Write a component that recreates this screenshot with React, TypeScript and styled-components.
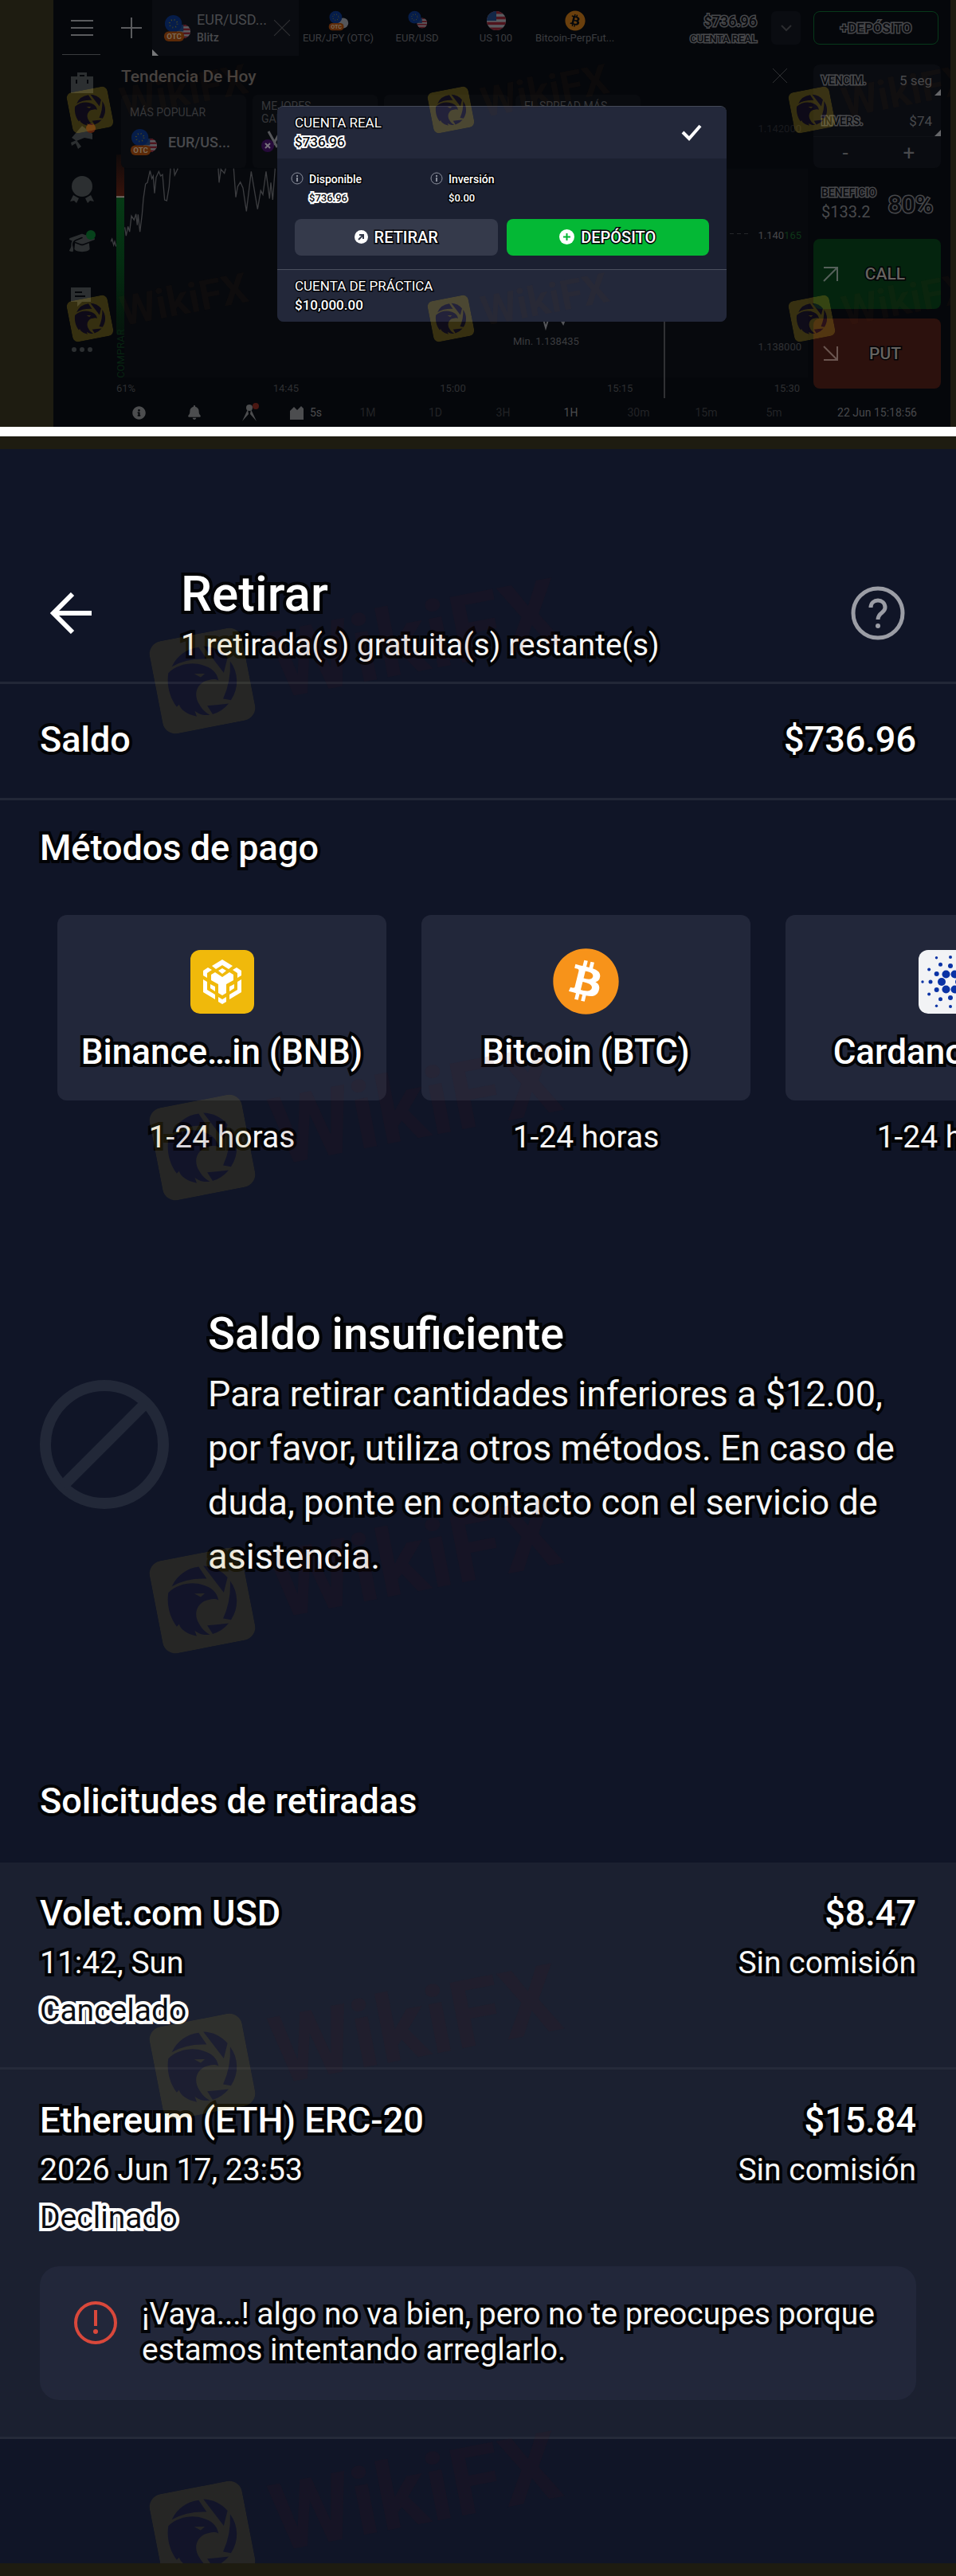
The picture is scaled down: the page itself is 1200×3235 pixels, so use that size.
import React from 'react';
import styled, { createGlobalStyle, css } from 'styled-components';
import { FaBell, FaBitcoin, FaGraduationCap } from 'react-icons/fa6';
import { FaInfoCircle } from 'react-icons/fa';

const GlobalStyle = createGlobalStyle`
  * { box-sizing: border-box; }
  body { margin: 0; background: #fff; font-family: Roboto, "Liberation Sans", sans-serif; }
  h1, h2, h3, p, ul { margin: 0; padding: 0; font-weight: inherit; }
  ul { list-style: none; }
  button { font: inherit; color: inherit; border: 0; padding: 0; background: none; cursor: pointer; }
  svg { display: block; flex: none; }
`;

const outline = css`
  -webkit-text-stroke: 8px #020306;
  paint-order: stroke fill;
`;

const Page = styled.div`
  display: flex;
  flex-direction: column;
  gap: 12px;
`;

/* ---------- shared watermark ---------- */

const MarkBox = styled.div<{ $x: number; $y: number; $size: number; $strong?: boolean }>`
  position: absolute;
  left: ${(p) => p.$x}px;
  top: ${(p) => p.$y}px;
  display: flex;
  align-items: center;
  gap: ${(p) => p.$size / 4}px;
  width: max-content;
  transform: rotate(-11deg);
  transform-origin: ${(p) => p.$size / 2}px ${(p) => p.$size / 2}px;
  pointer-events: none;
  z-index: 5;
  span {
    font: 700 ${(p) => p.$size}px/1 Roboto, sans-serif;
    color: ${(p) => (p.$strong ? 'rgba(120, 50, 20, 0.07)' : 'rgba(80, 20, 20, 0.10)')};
  }
  svg { opacity: ${(p) => (p.$strong ? 0.27 : 0.13)}; }
`;

function Watermark({ x, y, size, strong }: { x: number; y: number; size: number; strong?: boolean }) {
  return (
    <MarkBox $x={x} $y={y} $size={size} $strong={strong} aria-hidden>
      <svg width={size} height={size} viewBox="0 0 100 100">
        <rect width="100" height="100" rx="14" fill="#b89a1e" />
        <g fill="#26143c">
          <path d="M21 29A36 36 0 0 1 53 14L59 28Q38 23 21 29Z" />
          <path d="M58 14A36 36 0 0 1 81 31L74 46Z" />
          <path d="M83 35A36 36 0 0 1 76 76L68 73Q80 56 83 35Z" />
          <path d="M73 79A36 36 0 0 1 54 87L50 77Q62 78 73 79Z" />
          <path d="M16 35C28 27 44 28 54 34C62 38 67 44 67 53C62 49 57 51 52 51C42 54 38 64 42 74C44 80 47 84 51 87C43 87 39 83 36 80L37 86C27 82 21 75 21 70L18 72C12 60 12 46 16 35Z" />
        </g>
        <path d="M43 41L54 43L49 46Z" fill="#b89a1e" />
      </svg>
      <span>WikiFX</span>
    </MarkBox>
  );
}

/* ---------- trading terminal ---------- */

const Terminal = styled.section`
  position: relative;
  overflow: hidden;
  display: flex;
  flex-direction: column;
  height: 536px;
  border-left: 67px solid #1e1c11;
  border-right: 7px solid #1e1c11;
  background: #05070b;
  color: #48494c;
`;

const TopBar = styled.header`
  display: flex;
  height: 71px;
`;

const BarButton = styled.button<{ $w: number }>`
  position: relative;
  width: ${(p) => p.$w}px;
  display: grid;
  place-items: center;
  color: #5a5b5e;
`;

const MenuButton = styled(BarButton)`
  &::after {
    content: '';
    position: absolute;
    left: 11px;
    right: 13px;
    bottom: 1px;
    height: 1px;
    background: #3a3b3e;
  }
`;

const ActiveTab = styled.div`
  position: relative;
  width: 184px;
  display: flex;
  align-items: center;
  gap: 7px;
  padding-left: 14px;
  background: #0a0c11;
  &::after {
    content: '';
    position: absolute;
    left: 0;
    bottom: 0;
    border: 4px solid transparent;
    border-left-color: #77787a;
    border-bottom-color: #77787a;
  }
`;

const ActiveName = styled.div`
  flex: 1;
  font-size: 18px;
  line-height: 24px;
  white-space: nowrap;
  small { display: block; font-size: 14px; line-height: 20px; font-weight: 500; }
`;

const CloseButton = styled.button`
  padding-right: 10px;
  color: #303134;
`;

const Tab = styled.button`
  width: 99px;
  display: flex;
  flex-direction: column;
  align-items: center;
  gap: 1px;
  padding-top: 13px;
  font-size: 13px;
  line-height: 16px;
  white-space: nowrap;
  color: #3c3d40;
`;

const hollow = css`
  color: #08090d;
  -webkit-text-stroke: 3px #47484b;
  paint-order: stroke fill;
  font-weight: 500;
`;

const Balance = styled.div`
  margin-left: auto;
  padding-top: 15px;
  text-align: right;
  font-size: 18px;
  line-height: 24px;
  ${hollow}
  small { display: block; font-size: 13px; line-height: 20px; }
`;

const Chevron = styled.button`
  width: 37px;
  height: 42px;
  margin: 14px 16px 0 18px;
  border-radius: 6px;
  background: #0a0c11;
  display: grid;
  place-items: center;
`;

const TopDeposit = styled.button`
  width: 157px;
  height: 42px;
  margin: 14px 15px 0 0;
  border: 1px solid #07391a;
  border-radius: 8px;
  font-size: 17px;
  ${hollow}
`;

const Body = styled.div`
  flex: 1;
  display: grid;
  grid-template-columns: 72px 1fr 179px;
`;

const Sidebar = styled.nav`
  display: flex;
  flex-direction: column;
`;

const SideButton = styled.button<{ $dot?: string }>`
  position: relative;
  height: 67px;
  display: grid;
  place-items: center;
  color: #2c2f31;
  &::after {
    content: '';
    display: ${(p) => (p.$dot ? 'block' : 'none')};
    position: absolute;
    right: 19px;
    top: 18px;
    width: 12px;
    height: 12px;
    border-radius: 50%;
    background: ${(p) => p.$dot};
  }
`;

const Main = styled.div`
  position: relative;
  display: flex;
  flex-direction: column;
`;

const ChartSvg = styled.svg`
  position: absolute;
  inset: 0;
  width: 100%;
  height: 100%;
  text { font-family: Roboto, sans-serif; font-size: 13px; }
`;

const TrendHead = styled.div`
  position: relative;
  display: flex;
  justify-content: space-between;
  height: 49px;
  padding: 0 15px 0 13px;
  h2 { font-size: 21px; line-height: 52px; font-weight: 500; color: #47423f; }
`;

const TrendCards = styled.div`
  position: relative;
  display: flex;
  gap: 8px;
  padding-left: 13px;
`;

const TrendCard = styled.div`
  width: 157px;
  height: 92px;
  padding: 6px 11px;
  border-radius: 6px;
  background: #090b0f;
  color: #36373a;
  font-size: 14px;
  line-height: 16px;
`;

const TrendLabel = styled.div`
  height: 32px;
  display: flex;
  align-items: center;
`;

const TrendAsset = styled.div`
  display: flex;
  align-items: center;
  gap: 13px;
  margin-top: 4px;
  font-size: 18px;
  line-height: 28px;
  font-weight: 500;
  color: #48494c;
`;

const TimeAxis = styled.div`
  position: relative;
  margin-top: auto;
  display: grid;
  grid-template-columns: 197fr 210fr 210fr 210fr 31fr;
  padding: 0 10px 0 7px;
  font-size: 13px;
  line-height: 24px;
  color: #2e2f32;
`;

const Toolbar = styled.div`
  position: relative;
  display: flex;
  height: 36px;
  font-size: 14px;
  color: #222326;
`;

const Tool = styled.button`
  position: relative;
  width: 70px;
  display: flex;
  align-items: center;
  justify-content: center;
  gap: 8px;
  color: #4c4d4f;
`;

const Range = styled.button<{ $on?: boolean }>`
  flex: 1;
  color: ${(p) => (p.$on ? '#4c4d4f' : 'inherit')};
`;

const TradePanel = styled.aside`
  display: flex;
  flex-direction: column;
  padding: 11px 12px 0 7px;
`;

const Fields = styled.div`
  border-radius: 8px;
  background: #0a0c11;
  overflow: hidden;
`;

const Field = styled.div`
  position: relative;
  display: flex;
  align-items: center;
  justify-content: space-between;
  height: 39px;
  padding: 0 11px 0 10px;
  font-size: 17px;
  &::after {
    content: '';
    position: absolute;
    right: 0;
    bottom: 0;
    border: 4px solid transparent;
    border-right-color: #66676a;
    border-bottom-color: #66676a;
  }
  & + & { margin-top: 12px; }
`;

const HollowLabel = styled.span<{ $size?: number }>`
  font-size: ${(p) => p.$size ?? 14}px;
  ${hollow}
`;

const Stepper = styled.div`
  display: grid;
  grid-template-columns: 1fr 1fr;
  height: 40px;
  border-top: 1px solid #0f1116;
  font-size: 26px;
`;

const Profit = styled.div`
  display: flex;
  align-items: center;
  justify-content: space-between;
  height: 48px;
  margin: 21px 10px 20px;
  font-size: 20px;
  div { display: flex; flex-direction: column; gap: 4px; }
`;

const TradeButton = styled.button<{ $bg: string }>`
  display: grid;
  grid-template-columns: 20px 1fr;
  align-items: center;
  height: 88px;
  margin-bottom: 12px;
  padding: 0 12px;
  border-radius: 8px;
  background: ${(p) => p.$bg};
  font-size: 21px;
  font-weight: 500;
  color: #66635f;
  ${outline}
  -webkit-text-stroke-width: 3px;
`;

const Clock = styled.time`
  margin-top: auto;
  font-size: 14px;
  line-height: 36px;
  text-align: center;
`;

const DialogLayer = styled.div`
  position: absolute;
  inset: 0;
  display: grid;
  place-items: center;
`;

const Dialog = styled.div`
  width: 564px;
  border-radius: 8px;
  overflow: hidden;
  background: #1b2031;
  color: #fff;
  border-top: 1px solid #454a58;
`;

const Account = styled.div<{ $h: number }>`
  display: flex;
  align-items: center;
  justify-content: space-between;
  height: ${(p) => p.$h}px;
  padding: 0 31px 0 22px;
  background: #23283a;
  font-size: 17px;
  line-height: 24px;
`;

const Dark = styled.p<{ $bold?: boolean }>`
  font-weight: ${(p) => (p.$bold ? 500 : 400)};
  ${outline}
  -webkit-text-stroke-width: 3px;
`;

const White = styled.p`
  font-weight: 500;
  color: #0a0c10;
  -webkit-text-stroke: 4px #fff;
  paint-order: stroke fill;
`;

const Figures = styled.div`
  display: grid;
  grid-template-columns: 175px 1fr;
  padding: 13px 17px 15px;
`;

const Figure = styled.div`
  display: flex;
  gap: 7px;
  font-size: 14px;
  line-height: 26px;
  svg { margin-top: 4px; }
  p + p { font-size: 13px; line-height: 22px; }
`;

const Actions = styled.div`
  display: grid;
  grid-template-columns: 1fr 1fr;
  gap: 11px;
  padding: 0 22px 17px;
  border-bottom: 1px solid #4a4f5d;
`;

const Action = styled.button<{ $bg: string }>`
  display: flex;
  align-items: center;
  justify-content: center;
  gap: 8px;
  height: 46px;
  border-radius: 8px;
  background: ${(p) => p.$bg};
  font-size: 20px;
  font-weight: 500;
`;

const UsFlag = ({ cx, cy, r, id }: { cx: number; cy: number; r: number; id: string }) => (
  <g>
    <clipPath id={id}><circle cx={cx} cy={cy} r={r} /></clipPath>
    <g clipPath={`url(#${id})`}>
      <rect x={cx - r} y={cy - r} width={2 * r} height={2 * r} fill="#5a5c60" />
      {[0, 2, 4, 6].map((i) => (
        <rect key={i} x={cx - r} y={cy - r + (i * 2 * r) / 7} width={2 * r} height={(2 * r) / 7} fill="#50141d" />
      ))}
      <rect x={cx - r} y={cy - r} width={r} height={r} fill="#122747" />
    </g>
  </g>
);

function Pair({ w, id, otc, second }: { w: number; id: string; otc?: boolean; second?: boolean }) {
  return (
    <svg width={w} height={w} viewBox="0 0 36 36">
      {second ? <circle cx="26" cy="22" r="9" fill="#55565a" /> : <UsFlag cx={26} cy={22} r={9} id={id} />}
      <circle cx="13" cy="12" r="11" fill="#061d4a" />
      <circle cx="13" cy="12" r="5" fill="none" stroke="#4a4a20" strokeWidth="2" strokeDasharray="1 3" />
      {otc && (
        <>
          <rect x="1" y="22" width="26" height="13" rx="6" fill="#5c2a08" />
          <text x="14" y="32" fontSize="10" fontWeight="700" textAnchor="middle" fill="#7b6a58" fontFamily="Roboto">OTC</text>
        </>
      )}
    </svg>
  );
}

const Cross = ({ size }: { size: number }) => (
  <svg width={size} height={size} viewBox="0 0 20 20" stroke="currentColor" strokeWidth="1" fill="none">
    <path d="M1 1L19 19M19 1L1 19" />
  </svg>
);

const Info = () => (
  <svg width="16" height="16" viewBox="0 0 16 16" fill="none" stroke="#8b8f9b" strokeWidth="1">
    <circle cx="8" cy="8" r="7" />
    <path d="M8 7V12M8 4V6" strokeWidth="2" />
  </svg>
);

function Chart() {
  return (
    <ChartSvg viewBox="0 0 875 465" preserveAspectRatio="none">
      <rect y="141" x="17" width="858" height="263" fill="#07090d" />
      <g transform="translate(1 109) scale(.3333)" fill="none" stroke="#3c3d40" strokeWidth="4">
        <path d="M-5 375L2 362L8 385L12 372L17 390" />
        <path d="M50 318L55 350L62 315L68 335L75 275L85 290L92 268L97 310L100 270L107 335L115 270L120 210L128 155L135 150L145 105L152 135L157 125L162 190L168 130L178 108L185 125L192 120L200 215L208 218L217 165L222 97M235 97L238 122L250 97M402 97L405 150L412 100L425 115L430 97M460 97L468 205L475 165L485 148L495 170L508 258L526 108L550 250L562 180L570 195L582 108L595 210L600 150L607 215L616 97" />
      </g>
      <defs>
        <linearGradient id="sell" x1="0" x2="0" y1="0" y2="1">
          <stop offset="0" stopColor="#100a0a" />
          <stop offset="1" stopColor="#38130b" />
        </linearGradient>
        <linearGradient id="buy" x1="0" x2="0" y1="0" y2="1">
          <stop offset="0" stopColor="#063a15" />
          <stop offset=".5" stopColor="#042c11" />
          <stop offset="1" stopColor="#05140c" />
        </linearGradient>
      </defs>
      <rect x="7" y="124" width="10" height="53" fill="url(#sell)" />
      <rect x="7" y="176" width="10" height="2" fill="#77736c" />
      <rect x="7" y="178" width="10" height="170" fill="url(#buy)" />
      <text transform="translate(17 404) rotate(-90)" fill="#082412">COMPRAR</text>
      <path d="M777 223H800" stroke="#26272a" strokeDasharray="5 4" />
      <text x="867" y="96" textAnchor="end" fill="#191a1e">1.142000</text>
      <text x="867" y="230" textAnchor="end" fill="#47484b">1.140<tspan fill="#0d3518">165</tspan></text>
      <text x="867" y="369" textAnchor="end" fill="#303134">1.138000</text>
      <text x="505" y="362" fill="#3c3d40">Min. 1.138435</text>
      <path d="M543 330L546 341L549 331L565 331L568 336L570 331" fill="none" stroke="#55565a" strokeWidth="2" />
      <path d="M695 330V429" stroke="#303134" strokeWidth="2" />
    </ChartSvg>
  );
}

function TradingTerminal() {
  return (
    <Terminal>
      <TopBar>
        <MenuButton $w={72} aria-label="Menú">
          <svg width="28" height="22" viewBox="0 0 28 22" stroke="currentColor" strokeWidth="2"><path d="M0 2H28M0 11H28M0 20H28" /></svg>
        </MenuButton>
        <BarButton $w={52} aria-label="Añadir">
          <svg width="26" height="26" viewBox="0 0 26 26" stroke="currentColor" strokeWidth="2"><path d="M13 0V26M0 13H26" /></svg>
        </BarButton>
        <ActiveTab>
          <Pair w={35} id="f1" otc />
          <ActiveName>EUR/USD...<small>Blitz</small></ActiveName>
          <CloseButton aria-label="Cerrar"><Cross size={22} /></CloseButton>
        </ActiveTab>
        <Tab><Pair w={26} id="f2" otc second />EUR/JPY (OTC)</Tab>
        <Tab><Pair w={26} id="f3" />EUR/USD</Tab>
        <Tab>
          <svg width="26" height="26" viewBox="0 0 26 26"><UsFlag cx={13} cy={13} r={12} id="f4" /></svg>
          US 100
        </Tab>
        <Tab><FaBitcoin size={26} color="#6a3f0d" />Bitcoin-PerpFut...</Tab>
        <Balance>$736.96<small>CUENTA REAL</small></Balance>
        <Chevron aria-label="Cambiar cuenta">
          <svg width="14" height="9" viewBox="0 0 14 9" fill="none" stroke="#2c2d30" strokeWidth="2"><path d="M1 1L7 7L13 1" /></svg>
        </Chevron>
        <TopDeposit>+DEPÓSITO</TopDeposit>
      </TopBar>

      <Body>
        <Sidebar>
          <SideButton aria-label="Cartera">
            <svg width="28" height="26" viewBox="0 0 28 26" fill="currentColor"><path d="M8 5V0H20V5H28V26H0V5ZM11 5H17V3H11ZM6 9V14H8V9ZM20 9V14H22V9Z" fillRule="evenodd" /></svg>
          </SideButton>
          <SideButton aria-label="Ofertas" $dot="#5a230f">
            <svg width="30" height="32" viewBox="0 0 30 32" fill="currentColor"><path d="M2 18L15 3L28 13V20L18 18L8 22ZM1 24L8 21L14 29L10 32L7 25L2 28Z" /></svg>
          </SideButton>
          <SideButton aria-label="Torneos">
            <svg width="30" height="36" viewBox="0 0 30 36" fill="currentColor"><circle cx="15" cy="14" r="13" /><path d="M4 25L11 29L8 35L5 32L0 33ZM26 25L19 29L22 35L25 32L30 33Z" /></svg>
          </SideButton>
          <SideButton aria-label="Educación" $dot="#06421b"><FaGraduationCap size={32} /></SideButton>
          <SideButton aria-label="Noticias">
            <svg width="28" height="26" viewBox="0 0 28 26" fill="currentColor"><path d="M0 2H25V20H14L8 26V20H0ZM5 7V9H14V7ZM5 12V14H18V12Z" fillRule="evenodd" /></svg>
          </SideButton>
          <SideButton aria-label="Más">
            <svg width="26" height="6" viewBox="0 0 26 6" fill="currentColor"><circle cx="3" cy="3" r="3" /><circle cx="13" cy="3" r="3" /><circle cx="23" cy="3" r="3" /></svg>
          </SideButton>
        </Sidebar>

        <Main>
          <Chart />
          <TrendHead>
            <h2>Tendencia De Hoy</h2>
            <CloseButton aria-label="Cerrar tendencias"><Cross size={20} /></CloseButton>
          </TrendHead>
          <TrendCards>
            <TrendCard>
              <TrendLabel>MÁS POPULAR</TrendLabel>
              <TrendAsset><Pair w={35} id="f5" otc />EUR/US...</TrendAsset>
            </TrendCard>
            <TrendCard>
              <TrendLabel>MEJORES<br />GANANCIAS</TrendLabel>
              <svg width="36" height="36" viewBox="0 0 36 36">
                <path d="M9 8L20 28M24 8L12 30" stroke="#55565a" strokeWidth="3" />
                <circle cx="8" cy="26" r="8" fill="#260a3a" />
                <path d="M5 23L11 29M11 23L5 29" stroke="#77737c" strokeWidth="2" />
              </svg>
            </TrendCard>
            <TrendCard />
            <TrendCard><TrendLabel>EL SPREAD MÁS BAJO</TrendLabel></TrendCard>
          </TrendCards>
          <TimeAxis>
            <span>61%</span><span>14:45</span><span>15:00</span><span>15:15</span><span>15:30</span>
          </TimeAxis>
          <Toolbar>
            <Tool aria-label="Información"><FaInfoCircle size={17} /></Tool>
            <Tool aria-label="Alertas"><FaBell size={18} /></Tool>
            <Tool aria-label="Dibujo">
              <svg width="22" height="24" viewBox="0 0 22 24"><g fill="currentColor"><circle cx="10" cy="6" r="4" /><path d="M8 8L1 23L9 14ZM12 8L19 23L11 14Z" /></g><circle cx="18" cy="4" r="4" fill="#4a1712" /></svg>
            </Tool>
            <Tool>
              <svg width="17" height="18" viewBox="0 0 17 18" fill="currentColor"><path d="M0 7L5 2L9 6L14 1L17 4V18H0Z" /></svg>
              5s
            </Tool>
            <Range>1M</Range><Range>1D</Range><Range>3H</Range><Range $on>1H</Range>
            <Range>30m</Range><Range>15m</Range><Range>5m</Range>
          </Toolbar>
        </Main>

        <TradePanel>
          <Fields>
            <Field><HollowLabel>VENCIM.</HollowLabel>5 seg</Field>
            <Field><HollowLabel>INVERS.</HollowLabel>$74</Field>
            <Stepper><button aria-label="Menos">-</button><button aria-label="Más inversión">+</button></Stepper>
          </Fields>
          <Profit>
            <div><HollowLabel>BENEFICIO</HollowLabel>$133.2</div>
            <HollowLabel $size={30}>80%</HollowLabel>
          </Profit>
          <TradeButton $bg="#04240e">
            <svg width="20" height="20" viewBox="0 0 20 20" fill="none" stroke="#55605a" strokeWidth="2"><path d="M1 19L18 2M1 2H18V19" /></svg>
            CALL
          </TradeButton>
          <TradeButton $bg="#2c110d">
            <svg width="20" height="20" viewBox="0 0 20 20" fill="none" stroke="#6a5550" strokeWidth="2"><path d="M1 1L18 18M18 1V18H1" /></svg>
            PUT
          </TradeButton>
          <Clock>22 Jun 15:18:56</Clock>
        </TradePanel>
      </Body>

      <DialogLayer>
        <Dialog role="dialog" aria-label="Cuentas">
          <Account $h={65}>
            <div><Dark>CUENTA REAL</Dark><White>$736.96</White></div>
            <svg width="26" height="22" viewBox="0 0 26 22" fill="none" stroke="#fff" strokeWidth="4"><path d="M2 11L10 19L24 3" /></svg>
          </Account>
          <Figures>
            <Figure><Info /><div><Dark $bold>Disponible</Dark><White>$736.96</White></div></Figure>
            <Figure><Info /><div><Dark $bold>Inversión</Dark><Dark $bold>$0.00</Dark></div></Figure>
          </Figures>
          <Actions>
            <Action $bg="#353a4b">
              <svg width="17" height="17" viewBox="0 0 17 17"><circle cx="8.5" cy="8.5" r="8.5" fill="#fff" /><path d="M5 12L11 6M6 6H11V11" fill="none" stroke="#353a4b" strokeWidth="2" /></svg>
              <Dark as="span" $bold>RETIRAR</Dark>
            </Action>
            <Action $bg="#04b835">
              <svg width="19" height="19" viewBox="0 0 19 19"><circle cx="9.5" cy="9.5" r="9.5" fill="#fff" /><path d="M9.5 5V14M5 9.5H14" stroke="#04b835" strokeWidth="2" /></svg>
              <Dark as="span" $bold>DEPÓSITO</Dark>
            </Action>
          </Actions>
          <Account $h={65}>
            <div><Dark>CUENTA DE PRÁCTICA</Dark><Dark $bold>$10,000.00</Dark></div>
          </Account>
        </Dialog>
      </DialogLayer>

      {[112, 374].map((y) => [20, 473, 926].map((x) => <Watermark key={`${x}-${y}`} x={x} y={y} size={52} strong />))}
    </Terminal>
  );
}

/* ---------- withdrawal screen ---------- */

const Screen = styled.section`
  position: relative;
  overflow: hidden;
  border-top: 16px solid #1e1c11;
  border-bottom: 16px solid #1e1c11;
  padding-bottom: 156px;
  background: #101527;
  color: #fff;
`;

const ScreenHead = styled.header`
  display: grid;
  grid-template-columns: 177px 1fr auto;
  align-items: center;
  padding: 142px 63px 22px 50px;
  border-bottom: 3px solid #222737;
`;

const BackButton = styled.button`
  width: 78px;
  height: 78px;
  display: grid;
  place-items: center;
`;

const Title = styled.h1`
  font-size: 62px;
  line-height: 80px;
  font-weight: 500;
  ${outline}
`;

const Text = styled.p<{ $lh?: number }>`
  font-size: 39px;
  line-height: ${(p) => p.$lh ?? 60}px;
  color: #f6f6f6;
  ${outline}
`;

const Strong = styled.p`
  font-size: 45px;
  line-height: 60px;
  font-weight: 500;
  ${outline}
`;

const BalanceRow = styled.div`
  display: flex;
  justify-content: space-between;
  padding: 40px 50px 43px;
  border-bottom: 3px solid #222737;
`;

const SectionTitle = styled(Strong)<{ $top: number; $bottom: number }>`
  padding: ${(p) => p.$top}px 50px ${(p) => p.$bottom}px;
`;

const Methods = styled.ul`
  display: flex;
  gap: 44px;
  padding-left: 72px;
  overflow: hidden;
`;

const Method = styled.li`
  flex: 0 0 413px;
  text-align: center;
`;

const MethodCard = styled.button`
  width: 100%;
  height: 233px;
  display: flex;
  flex-direction: column;
  align-items: center;
  gap: 16px;
  padding-top: 41px;
  margin-bottom: 18px;
  border-radius: 12px;
  background: #22273a;
`;

const MethodName = styled(Strong)`
  font-size: 44px;
`;

const MethodIcon = styled.span`
  height: 85px;
  display: grid;
  place-items: center;
`;

const Shortage = styled.div`
  display: grid;
  grid-template-columns: 162px 1fr;
  align-items: center;
  gap: 49px;
  padding: 183px 50px 0;
`;

const ShortageTitle = styled.h2`
  font-size: 56px;
  line-height: 72px;
  font-weight: 500;
  margin-bottom: 6px;
  ${outline}
`;

const ShortageText = styled(Text)`
  font-size: 45px;
`;

const Requests = styled.ul`
  background: #1b2030;
`;

const Request = styled.li<{ $bottom: number }>`
  padding: 34px 50px ${(p) => p.$bottom}px;
  border-bottom: 3px solid #252a39;
`;

const RequestLine = styled.div`
  display: flex;
  justify-content: space-between;
  & + & { margin-top: 2px; }
`;

const Status = styled.p`
  font-size: 39px;
  line-height: 60px;
  color: #0c0e14;
  -webkit-text-stroke: 8px #fff;
  paint-order: stroke fill;
`;

const Notice = styled.div`
  display: flex;
  gap: 31px;
  margin-top: 31px;
  padding: 38px 36px 40px 43px;
  border-radius: 24px;
  background: #22273a;
  svg { margin-top: 6px; }
`;

const BnbIcon = () => (
  <svg width="80" height="80" viewBox="0 0 80 80">
    <rect width="80" height="80" rx="12" fill="#f0b90b" />
    <g fill="#fff">
      <path d="M40 12L53 20L48 24L40 19L32 24L27 20ZM40 23L45 26L40 30L35 26Z" />
      <path d="M16 26L22 22L27 25L21 29V35L16 32ZM64 26L58 22L53 25L59 29V35L64 32Z" />
      <path d="M26 31L31 28L40 34L49 28L54 31V38L45 43V54L40 57L35 54V43L26 38Z" />
      <path d="M16 37L21 40V50L31 56V62L16 53ZM64 37L59 40V50L49 56V62L64 53Z" />
      <path d="M25 43L31 46V52L25 48ZM55 43L49 46V52L55 48ZM35 59L40 62L45 59V65L40 68L35 65Z" />
    </g>
  </svg>
);

const BtcIcon = () => (
  <svg width="85" height="85" viewBox="0 0 85 85">
    <circle cx="42" cy="42" r="36" fill="#fff" />
    <FaBitcoin size={85} color="#f7931a" />
  </svg>
);

const cardanoRings = [
  { d: 11, r: 5, a: 0 },
  { d: 20, r: 3, a: 30 },
  { d: 25, r: 2.5, a: 0 },
  { d: 31, r: 2, a: 30 },
  { d: 35, r: 1.7, a: 0 },
];

const CardanoIcon = () => (
  <svg width="80" height="80" viewBox="0 0 80 80">
    <rect width="80" height="80" rx="12" fill="#f2f3f5" />
    {cardanoRings.map((ring) =>
      [0, 1, 2, 3, 4, 5].map((i) => {
        const t = ((ring.a + i * 60) * Math.PI) / 180;
        return <circle key={`${ring.d}-${i}`} cx={40 + ring.d * Math.cos(t)} cy={40 + ring.d * Math.sin(t)} r={ring.r} fill="#0a33a5" />;
      }),
    )}
  </svg>
);

const methods = [
  { name: 'Binance…in (BNB)', icon: <BnbIcon /> },
  { name: 'Bitcoin (BTC)', icon: <BtcIcon /> },
  { name: 'Cardano (ADA)', icon: <CardanoIcon /> },
];

const requests = [
  { name: 'Volet.com USD', amount: '$8.47', date: '11:42, Sun', status: 'Cancelado' },
  {
    name: 'Ethereum (ETH) ERC-20',
    amount: '$15.84',
    date: '2026 Jun 17, 23:53',
    status: 'Declinado',
    notice: '¡Vaya...! algo no va bien, pero no te preocupes porque estamos intentando arreglarlo.',
  },
];

function WithdrawScreen() {
  return (
    <Screen>
      <ScreenHead>
        <BackButton aria-label="Volver">
          <svg width="54" height="52" viewBox="0 0 54 52" fill="none" stroke="#fff" strokeWidth="6"><path d="M53 26H5M29 2L5 26L29 50" /></svg>
        </BackButton>
        <div>
          <Title>Retirar</Title>
          <Text $lh={48}>1 retirada(s) gratuita(s) restante(s)</Text>
        </div>
        <button aria-label="Ayuda">
          <svg width="70" height="70" viewBox="0 0 70 70" fill="none" stroke="#9b9da5" strokeWidth="5">
            <circle cx="35" cy="35" r="31" />
            <path d="M26 28C26 16 44 16 44 28C44 35 35 34 35 43" />
            <circle cx="35" cy="51" r="3" fill="#9b9da5" stroke="none" />
          </svg>
        </button>
      </ScreenHead>

      <BalanceRow><Strong>Saldo</Strong><Strong>$736.96</Strong></BalanceRow>

      <SectionTitle as="h2" $top={30} $bottom={54}>Métodos de pago</SectionTitle>
      <Methods>
        {methods.map((m) => (
          <Method key={m.name}>
            <MethodCard>
              <MethodIcon>{m.icon}</MethodIcon>
              <MethodName as="span">{m.name}</MethodName>
            </MethodCard>
            <Text $lh={56}>1-24 horas</Text>
          </Method>
        ))}
      </Methods>

      <Shortage>
        <svg width="162" height="162" viewBox="0 0 162 162" fill="none" stroke="#222838" strokeWidth="14">
          <circle cx="81" cy="81" r="74" />
          <path d="M29 133L133 29" />
        </svg>
        <div>
          <ShortageTitle>Saldo insuficiente</ShortageTitle>
          <ShortageText $lh={68}>
            Para retirar cantidades inferiores a $12.00, por favor, utiliza otros métodos. En caso de duda, ponte en contacto con el servicio de asistencia.
          </ShortageText>
        </div>
      </Shortage>

      <SectionTitle as="h2" $top={243} $bottom={47}>Solicitudes de retiradas</SectionTitle>
      <Requests>
        {requests.map((r) => (
          <Request key={r.name} $bottom={r.notice ? 46 : 41}>
            <RequestLine><Strong>{r.name}</Strong><Strong>{r.amount}</Strong></RequestLine>
            <RequestLine><Text>{r.date}</Text><Text>Sin comisión</Text></RequestLine>
            <Status>{r.status}</Status>
            {r.notice && (
              <Notice role="alert">
                <svg width="54" height="54" viewBox="0 0 54 54" fill="none" stroke="#d9483b" strokeWidth="4">
                  <circle cx="27" cy="27" r="25" />
                  <path d="M27 11V31" />
                  <circle cx="27" cy="38" r="3" fill="#d9483b" stroke="none" />
                </svg>
                <Text $lh={45}>{r.notice}</Text>
              </Notice>
            )}
          </Request>
        ))}
      </Requests>

      {[232, 818, 1387, 1972, 2559].map((y) => <Watermark key={y} x={195} y={y} size={118} />)}
    </Screen>
  );
}

export default function App() {
  return (
    <Page>
      <GlobalStyle />
      <TradingTerminal />
      <WithdrawScreen />
    </Page>
  );
}
